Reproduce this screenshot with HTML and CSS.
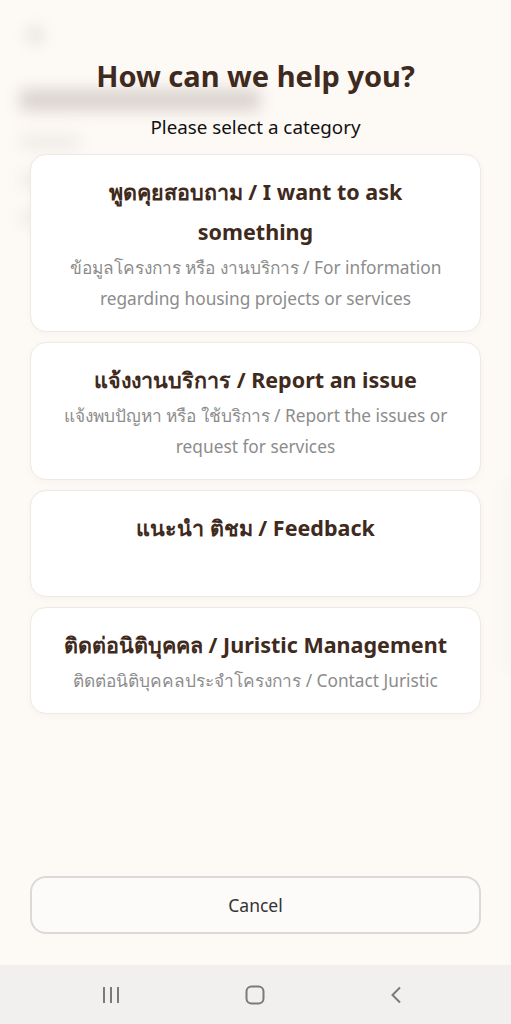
FILE: index.html
```html
<!DOCTYPE html>
<html lang="en">
<head>
    <meta charset="UTF-8">
    <meta name="viewport" content="width=device-width, initial-scale=1.0">
    <title>Contact Us</title>
    <link rel="stylesheet" href="styles.css">
</head>

<body>
    <!-- Page behind the sheet, blurred so only shapes remain -->
    <div class="backdrop">
        <div class="bd-back"></div>
        <div class="bd-title"></div>
        <div class="bd-line short"></div>
        <div class="bd-line"></div>
        <div class="bd-line wide"></div>
        <div class="bd-card"></div>
    </div>

    <!-- Category sheet -->
    <div class="sheet">
        <h1 class="sheet-title">How can we help you?</h1>
        <p class="sheet-sub">Please select a category</p>

        <div class="options">
            <div class="option">
                <div class="option-title">พูดคุยสอบถาม / I want to ask something</div>
                <div class="option-desc">ข้อมูลโครงการ หรือ งานบริการ / For information regarding housing projects or services</div>
            </div>
            <div class="option">
                <div class="option-title">แจ้งงานบริการ / Report an issue</div>
                <div class="option-desc">แจ้งพบปัญหา หรือ ใช้บริการ / Report the issues or request for services</div>
            </div>
            <div class="option">
                <div class="option-title">แนะนำ ติชม / Feedback</div>
                <div class="option-desc"></div>
            </div>
            <div class="option">
                <div class="option-title">ติดต่อนิติบุคคล / Juristic Management</div>
                <div class="option-desc">ติดต่อนิติบุคคลประจำโครงการ / Contact Juristic</div>
            </div>
        </div>

        <div class="spacer"></div>
        <button class="cancel">Cancel</button>
    </div>

    <!-- Android navigation bar -->
    <div class="navbar">
        <svg width="20" height="18" viewBox="0 0 20 18">
            <path d="M3 1v16M10 1v16M17 1v16" stroke="#7a7a7a" stroke-width="2" fill="none"/>
        </svg>
        <svg width="20" height="20" viewBox="0 0 20 20">
            <rect x="1.5" y="1.5" width="17" height="17" rx="5" stroke="#7a7a7a" stroke-width="2" fill="none"/>
        </svg>
        <svg width="14" height="18" viewBox="0 0 14 18">
            <path d="M11 1.5L3.5 9l7.5 7.5" stroke="#7a7a7a" stroke-width="2" fill="none"/>
        </svg>
    </div>
</body>
</html>
```

FILE: styles.css
```css
body {
    font-family: "Noto Sans", "Open Sans", sans-serif;
    margin: 0;
    padding: 0;
    width: 511px;
    height: 1024px;
    overflow: hidden;
    background: #fdf9f5;
    position: relative;
}

/* Blurred page underneath */
.backdrop {
    height: 965px;
    padding: 28px 0 0 20px;
    box-sizing: border-box;
    filter: blur(8px);
    opacity: 0.25;
    overflow: hidden;
}

.bd-back {
    width: 14px;
    height: 14px;
    margin-left: 8px;
    background: #888;
}

.bd-title {
    margin-top: 48px;
    width: 240px;
    height: 20px;
    background: #6a5a50;
}

.bd-line {
    height: 12px;
    width: 150px;
    background: #bbb;
    margin-top: 26px;
}

.bd-line.short { width: 60px; }
.bd-line.wide { width: 200px; }

.bd-card {
    margin-top: 250px;
    margin-left: 487px;
    width: 4px;
    height: 200px;
    border: 2px solid #999;
    border-right: none;
    border-radius: 10px 0 0 10px;
}

/* Sheet over the page */
.sheet {
    position: absolute;
    top: 0;
    left: 0;
    right: 0;
    height: 965px;
    padding: 0 30px 31px;
    box-sizing: border-box;
    display: flex;
    flex-direction: column;
    align-items: stretch;
}

.sheet-title {
    margin: 56px 0 0;
    text-align: center;
    font-size: 29px;
    line-height: 40px;
    font-weight: bold;
    color: #3f2a20;
}

.sheet-sub {
    margin: 20px 0 16px;
    text-align: center;
    font-size: 18.8px;
    line-height: 22px;
    color: #111;
}

.options {
    display: flex;
    flex-direction: column;
    gap: 10px;
}

.option {
    background: #fff;
    border: 1px solid #eee9e4;
    border-radius: 16px;
    padding: 17px 20px;
    text-align: center;
    box-shadow: 0 2px 6px rgba(120, 90, 60, 0.04);
}

.option-title {
    font-size: 21.5px;
    line-height: 40px;
    font-weight: bold;
    color: #3f2a20;
}

.option-desc {
    font-size: 17.3px;
    line-height: 31px;
    color: #8c8c8c;
    min-height: 31px;
}

.spacer {
    flex: 1;
}

.cancel {
    height: 58px;
    border: 2px solid #dcd9d6;
    border-radius: 16px;
    background: #fdfbf9;
    font-family: inherit;
    font-size: 17.5px;
    color: #333;
    cursor: pointer;
}

.navbar {
    position: absolute;
    left: 0;
    right: 0;
    bottom: 0;
    height: 59px;
    background: #f1f0ef;
    display: flex;
    align-items: center;
    justify-content: space-between;
    padding: 0 108px 0 101px;
}
```
